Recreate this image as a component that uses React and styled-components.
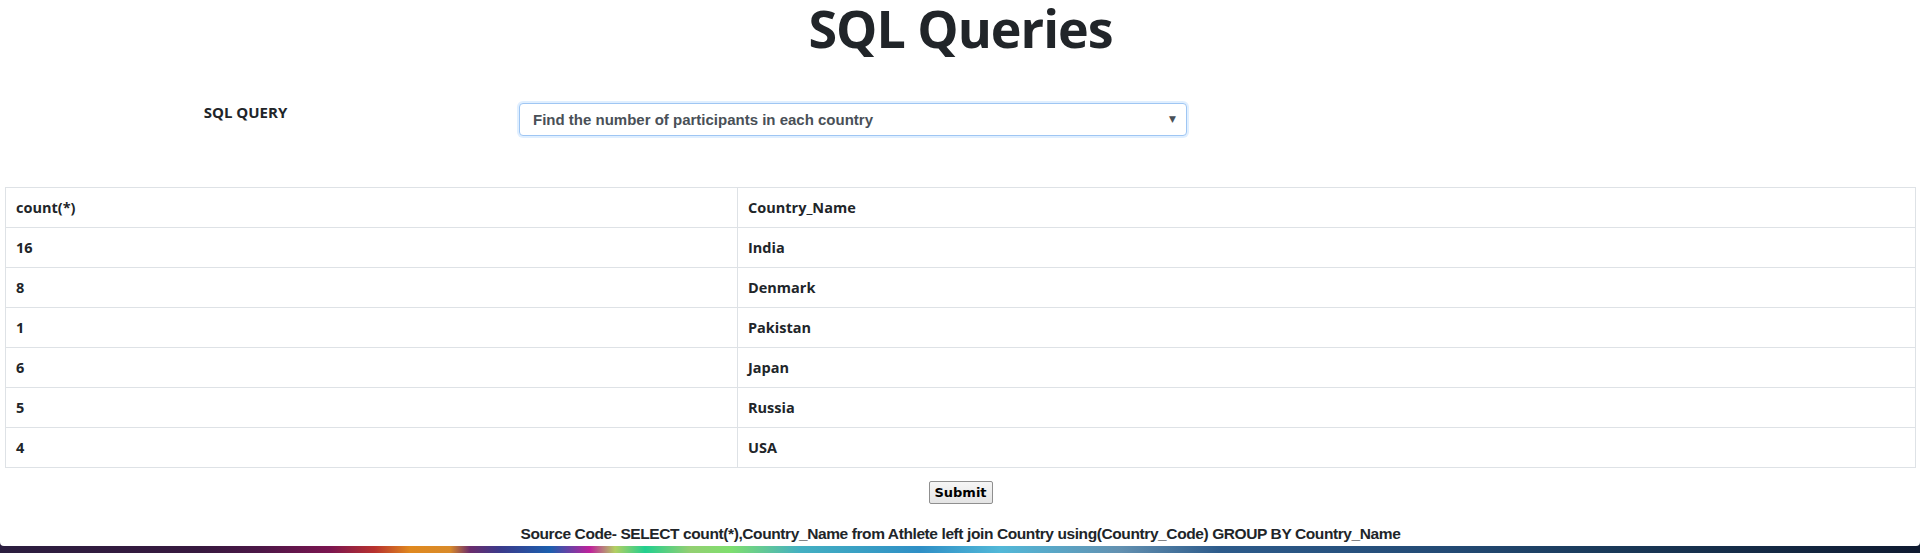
import React, { useState } from "react";
import styled, { createGlobalStyle } from "styled-components";

const GlobalStyle = createGlobalStyle`
  * {
    box-sizing: border-box;
  }
  html {
    background: linear-gradient(
      to right,
      #2b1e3f 0px,
      #37193f 200px,
      #4c1747 260px,
      #7b1550 330px,
      #b8322e 375px,
      #e0891f 410px,
      #d98b2a 450px,
      #6b2c6c 470px,
      #3b3a8b 500px,
      #1b5fae 550px,
      #c0219b 590px,
      #b3cf62 615px,
      #22cf8f 645px,
      #94cf72 690px,
      #7fdf6e 730px,
      #44b0c2 800px,
      #2f8fc6 920px,
      #52b8d8 1000px,
      #6391b1 1120px,
      #2d5b8b 1220px,
      #234a74 1450px,
      #1a3a5a 1600px,
      #0f1a30 1920px
    );
  }
  body {
    margin: 0;
    font-family: "Open Sans", "DejaVu Sans", sans-serif;
    color: #212529;
  }
`;

const Panel = styled.div`
  background: #ffffff;
  min-height: 546px;
  border-radius: 0 0 4px 4px;
  padding: 0 4px 0 5px;
`;

const Title = styled.h1`
  margin: 0;
  font-size: 52px;
  line-height: 56px;
  letter-spacing: -1px;
  font-weight: 700;
  text-align: center;
`;

const FormRow = styled.div`
  display: flex;
  align-items: flex-start;
  margin-top: 45px;
`;

const Label = styled.label`
  width: 481px;
  padding-left: 0;
  text-align: center;
  font-size: 15px;
  line-height: 22.5px;
  font-weight: 700;
`;

const SelectWrap = styled.div`
  position: relative;
  margin-left: 33px;
  margin-top: 2px;
  width: 668px;
`;

const Select = styled.select`
  appearance: none;
  width: 100%;
  height: 33px;
  padding: 0 30px 0 13px;
  border: 1px solid #9fc6f3;
  border-radius: 4px;
  box-shadow: 0 0 0 2px rgba(0, 123, 255, 0.12);
  background: #ffffff;
  font-family: "Liberation Sans", Arial, sans-serif;
  font-size: 15px;
  font-weight: 700;
  color: #495057;
  outline: none;
`;

const Arrow = styled.span`
  position: absolute;
  right: 11px;
  top: 11px;
  font-size: 9px;
  line-height: 1;
  color: #495057;
  pointer-events: none;
`;

const Table = styled.table`
  width: 100%;
  margin-top: 51px;
  border-collapse: collapse;
  table-layout: fixed;
`;

const Cell = styled.td`
  width: ${(p) => (p.$first ? "732px" : "auto")};
  border: 1px solid #dee2e6;
  padding: 8px 10px;
  line-height: 23px;
  font-size: 14.5px;
  font-weight: 700;
  text-align: left;
  vertical-align: middle;
`;

const HeadCell = styled(Cell).attrs({ as: "th" })``;

const ButtonRow = styled.div`
  display: flex;
  justify-content: center;
  margin-top: 13px;
`;

const SubmitButton = styled.button`
  height: 23px;
  width: 64px;
  padding: 0;
  font-family: "DejaVu Sans", sans-serif;
  font-size: 13px;
  font-weight: 700;
  color: #000000;
  background: linear-gradient(#f6f6f6, #e4e4e4);
  border: 1px solid #8f8f8f;
  border-radius: 2px;
`;

const Source = styled.p`
  margin: 20px 0 0;
  text-align: center;
  font-family: "Liberation Sans", Arial, sans-serif;
  font-size: 15.5px;
  line-height: 19px;
  letter-spacing: -0.4px;
  font-weight: 700;
`;

const rows = [
  ["16", "India"],
  ["8", "Denmark"],
  ["1", "Pakistan"],
  ["6", "Japan"],
  ["5", "Russia"],
  ["4", "USA"],
];

const App = () => {
  const [query, setQuery] = useState("participants");
  return (
    <>
      <GlobalStyle />
      <Panel>
        <Title>SQL Queries</Title>
        <FormRow>
          <Label>SQL QUERY</Label>
          <SelectWrap>
            <Select value={query} onChange={(e) => setQuery(e.target.value)}>
              <option value='participants'>
                Find the number of participants in each country
              </option>
            </Select>
            <Arrow>▼</Arrow>
          </SelectWrap>
        </FormRow>
        <Table>
          <thead>
            <tr>
              <HeadCell $first>count(*)</HeadCell>
              <HeadCell>Country_Name</HeadCell>
            </tr>
          </thead>
          <tbody>
            {rows.map(([count, name]) => (
              <tr key={name}>
                <Cell $first>{count}</Cell>
                <Cell>{name}</Cell>
              </tr>
            ))}
          </tbody>
        </Table>
        <ButtonRow>
          <SubmitButton>Submit</SubmitButton>
        </ButtonRow>
        <Source>
          Source Code- SELECT count(*),Country_Name from Athlete left join
          Country using(Country_Code) GROUP BY Country_Name
        </Source>
      </Panel>
    </>
  );
};

export default App;
